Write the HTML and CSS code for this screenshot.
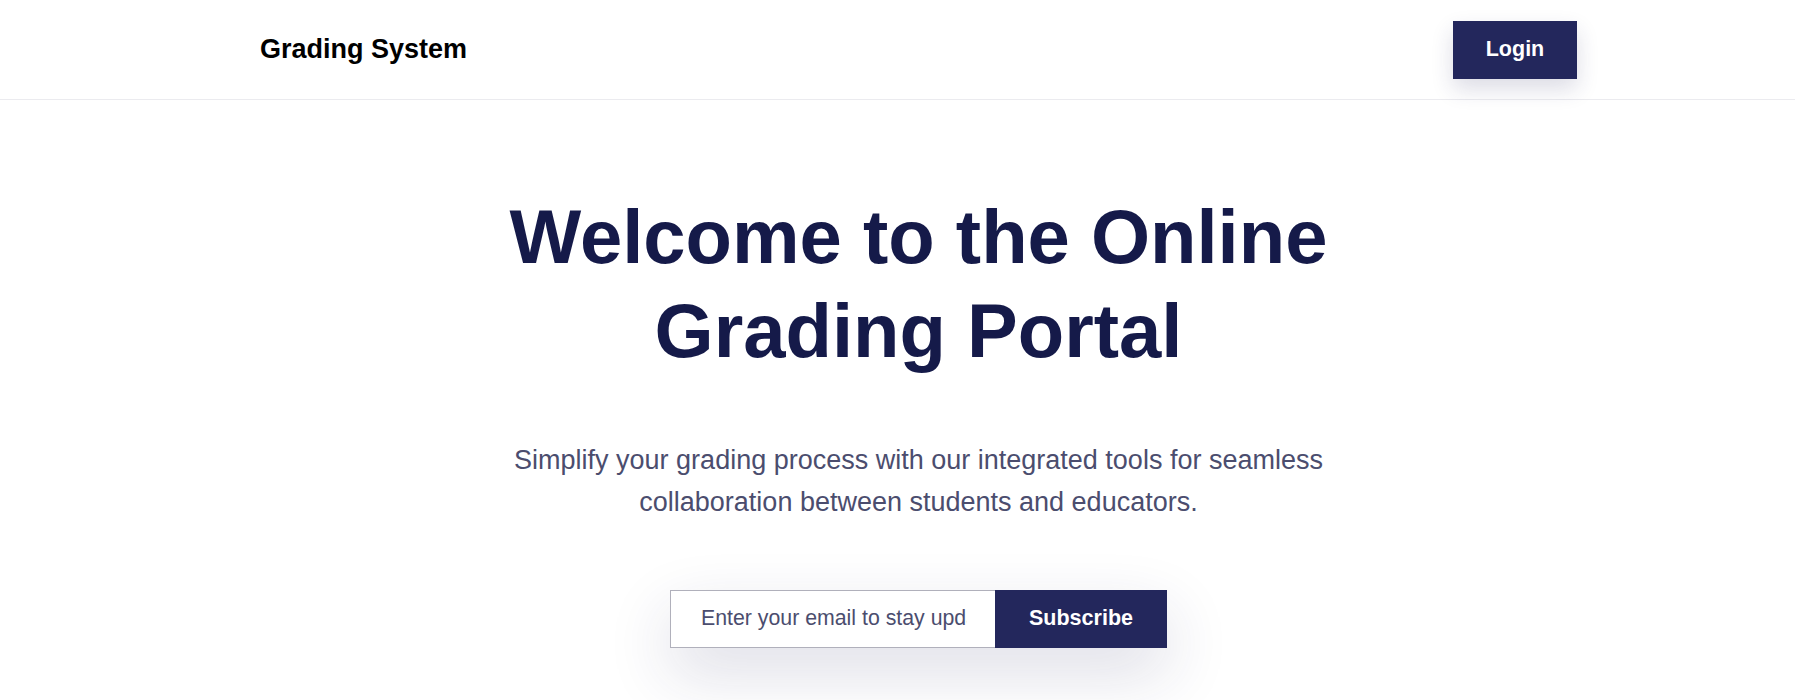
FILE: index.html
```html
<!DOCTYPE html>
<html lang="en">
<head>
<meta charset="utf-8">
<title>Grading System</title>
<link rel="stylesheet" href="styles.css">
</head>
<body>
<header class="site-header">
  <div class="container header-row">
    <div class="logo">Grading System</div>
    <button class="btn btn-login">Login</button>
  </div>
</header>
<main class="container hero">
  <h1 class="hero-title">Welcome to the Online Grading Portal</h1>
  <p class="hero-text">Simplify your grading process with our integrated tools for seamless collaboration between students and educators.</p>
  <form class="subscribe">
    <input class="subscribe-input" type="email" placeholder="Enter your email to stay updated">
    <button class="btn btn-subscribe" type="button">Subscribe</button>
  </form>
</main>
</body>
</html>
```

FILE: styles.css
```css
* { box-sizing: border-box; }

html, body {
  margin: 0;
  padding: 0;
  background: #ffffff;
  font-family: "Liberation Sans", Arial, Helvetica, sans-serif;
}

body {
  min-height: 700px;
}

.container {
  width: 1317px;
  margin-left: 260px;
}

.site-header {
  border-bottom: 1px solid #ebebef;
}

.header-row {
  height: 99px;
  display: flex;
  align-items: center;
  justify-content: space-between;
}

.logo {
  font-size: 27px;
  font-weight: 700;
  color: #000000;
}

.btn {
  border: none;
  background: #23275c;
  color: #ffffff;
  font-family: "Liberation Sans", Arial, Helvetica, sans-serif;
  font-weight: 700;
  font-size: 21.5px;
  cursor: pointer;
}

.btn-login {
  width: 124px;
  height: 58px;
  padding: 0;
  box-shadow: 0 10px 22px rgba(35, 39, 92, 0.16);
}

.hero {
  text-align: center;
  padding-top: 90px;
}

.hero-title {
  margin: 0 auto;
  max-width: 860px;
  font-size: 76px;
  line-height: 94px;
  font-weight: 700;
  color: #151a49;
}

.hero-text {
  margin: 61px auto 0;
  max-width: 860px;
  font-size: 27px;
  line-height: 42.4px;
  color: #4b4d6e;
}

.subscribe {
  margin-top: 66px;
  display: inline-flex;
  height: 58px;
  box-shadow: 0 24px 64px rgba(35, 39, 92, 0.16);
}

.subscribe-input {
  width: 325px;
  height: 58px;
  border: 1px solid #b0b0bb;
  border-right: none;
  padding: 0 28px 0 30px;
  font-family: "Liberation Sans", Arial, Helvetica, sans-serif;
  font-size: 21.3px;
  color: #4b4d6e;
  outline: none;
  background: #ffffff;
}

.subscribe-input::placeholder {
  color: #4b4d6e;
  opacity: 1;
}

.btn-subscribe {
  width: 172px;
  height: 58px;
  padding: 0;
}
```
